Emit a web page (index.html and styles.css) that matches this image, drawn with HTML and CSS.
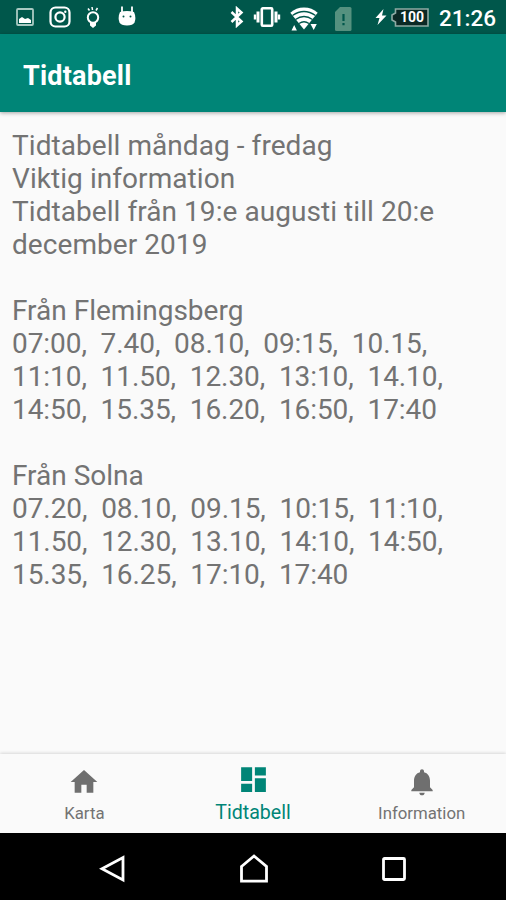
FILE: index.html
```html
<!DOCTYPE html>
<html lang="sv">
<head>
    <meta charset="UTF-8">
    <meta name="viewport" content="width=device-width, initial-scale=1.0">
    <title>Tidtabell</title>
    <link rel="stylesheet" href="styles.css">
</head>
<body>

    <!-- Status bar -->
    <div class="status-bar">
        <div class="status-left">
            <svg width="18" height="18" viewBox="0 0 18 18">
                <rect x="1" y="1" width="16" height="16" rx="1" fill="none" stroke="#a9c9c2" stroke-width="1.8"/>
                <path d="M3 15v-4l3-2 3 2 3-1 3 2v3z" fill="#fff"/>
            </svg>
            <svg width="22" height="22" viewBox="0 0 22 22" fill="none" stroke="#fff" stroke-width="2.2">
                <rect x="1.5" y="1.5" width="19" height="19" rx="5"/>
                <circle cx="11" cy="11" r="4.6"/>
                <circle cx="16.3" cy="5.7" r=".6" stroke-width="1.2"/>
            </svg>
            <svg width="16" height="22" viewBox="0 0 16 22" fill="none" stroke="#fff" stroke-width="2">
                <circle cx="8" cy="11.5" r="5.200"/>
                <path d="M3 2.500l1.500 2M7 1l.5 3M12.500 2L11 4.500" stroke-width="1.5"/>
                <path d="M5 16h6v3.500L8 22l-3-2.500z" fill="#fff" stroke="none"/>
            </svg>
            <svg width="18" height="22" viewBox="0 0 18 22">
                <path d="M4 8V1.500M14 8V1.500" stroke="#fff" stroke-width="1.8"/>
                <path d="M2 7q7-2 14 0q2.500 5.500.5 10.500q-1.500 3-7.500 3t-7.500-3q-2-5 .5-10.500z" fill="#fff"/>
                <circle cx="5.500" cy="11.500" r="1" fill="#00574b"/>
                <circle cx="12.500" cy="11.500" r="1" fill="#00574b"/>
            </svg>
        </div>
        <div class="status-right">
            <svg class="bluetooth" width="14" height="22" viewBox="0 0 14 22" fill="none" stroke="#fff" stroke-width="2.5">
                <path d="M1.500 6l10 9.500L7 19.500V2.500l4.500 4L1.500 16"/>
            </svg>
            <svg class="vibrate" width="28" height="20" viewBox="0 0 28 20" fill="none" stroke="#fff">
                <rect x="8.800" y="1.300" width="10.400" height="17.400" rx="1" stroke-width="2.600"/>
                <path d="M5 4.500v11M23 4.500v11" stroke-width="3"/>
                <path d="M2 7.500v5M26 7.500v5" stroke-width="2.400"/>
            </svg>
            <svg class="wifi" width="28" height="24" viewBox="0 0 28 24">
                <path d="M14 0.500q8 0 13.700 5.300L14 22.500.3 5.800Q6 .5 14 .5z" fill="#fff"/>
                <path d="M2.500 8.500q11.500-8 23 0M5.500 12.500q8.500-6 17 0M9 16.500q5-3.500 10 0" fill="none" stroke="#00574b" stroke-width="1.300"/>
                <path d="M1.500 23.500l2.700-5.500 2.700 5.500zM20.500 17h6.300l-3.100 6z" fill="#fff"/>
            </svg>
            <svg class="sim" width="18" height="24" viewBox="0 0 18 24">
                <path d="M6 0h10q1.500 0 1.500 1.500v21q0 1.500-1.500 1.500H2.500Q1 24 1 22.500V5z" fill="#55917f"/>
                <path d="M9.500 7v7M9.500 16v2.200" stroke="#00574b" stroke-width="2.200"/>
            </svg>
            <svg class="bolt" width="12" height="16" viewBox="0 0 12 16">
                <path d="M8.500 0L.5 9h4l-2 7 9-9.500H7z" fill="#fff"/>
            </svg>
            <div class="battery">
                <svg width="38" height="19" viewBox="0 0 38 19">
                    <path d="M4.500 1h32.500v17H4.500v-4L1 12V7l3.500-2z" fill="#0b2925" stroke="#8eaaa4" stroke-width="1.600"/>
                </svg>
                <span>100</span>
            </div>
            <span class="clock">21:26</span>
        </div>
    </div>

    <header class="app-bar">
        <h1>Tidtabell</h1>
    </header>

    <!-- Timetable -->
    <main class="content">
        <p class="info">Tidtabell måndag - fredag
Viktig information
Tidtabell från 19:e augusti till 20:e
december 2019</p>
        <h2>Från Flemingsberg</h2>
        <p class="times">07:00,  7.40,  08.10,  09:15,  10.15,
11:10,  11.50,  12.30,  13:10,  14.10,
14:50,  15.35,  16.20,  16:50,  17:40</p>
        <h2>Från Solna</h2>
        <p class="times">07.20,  08.10,  09.15,  10:15,  11:10,
11.50,  12.30,  13.10,  14:10,  14:50,
15.35,  16.25,  17:10,  17:40</p>
    </main>

    <!-- Bottom navigation -->
    <nav class="tabs">
        <a class="tab">
            <svg width="32" height="32" viewBox="0 0 24 24"><path d="M10 20v-6h4v6h5v-8h3L12 3 2 12h3v8z"/></svg>
            <span>Karta</span>
        </a>
        <a class="tab active">
            <svg width="33" height="33" viewBox="0 0 24 24"><path d="M3 13h8V3H3v10zm0 8h8v-6H3v6zm10 0h8V11h-8v10zm0-18v6h8V3h-8z"/></svg>
            <span>Tidtabell</span>
        </a>
        <a class="tab">
            <svg width="32" height="32" viewBox="0 0 24 24"><path d="M12 22c1.100 0 2-.9 2-2h-4c0 1.100.9 2 2 2zm6-6v-5c0-3.070-1.640-5.640-4.500-6.320V4c0-.83-.67-1.500-1.500-1.500s-1.500.67-1.500 1.500v.68C7.630 5.360 6 7.920 6 11v5l-2 2v1h16v-1l-2-2z"/></svg>
            <span>Information</span>
        </a>
    </nav>

    <!-- System buttons -->
    <div class="system-bar">
        <svg width="28" height="28" viewBox="0 0 28 28"><path d="M24 2.500v22.500L3 13.800z"/></svg>
        <svg width="30" height="30" viewBox="0 0 30 30"><path d="M2.500 12.500L15 2l12.500 10.500v14.700h-25z"/></svg>
        <svg width="26" height="26" viewBox="0 0 26 26"><rect x="2.500" y="2.500" width="21" height="21" rx="1"/></svg>
    </div>

</body>
</html>
```
FILE: styles.css
```css
body, html {
    margin: 0;
    padding: 0;
    height: 100%;
    overflow: hidden;
}
body {
    display: flex;
    flex-direction: column;
    font-family: Roboto, sans-serif;
    background-color: #fafafa;
}
svg {
    display: block;
    flex: none;
}

.status-bar {
    height: 34px;
    flex: none;
    display: flex;
    justify-content: space-between;
    background-color: #00574b;
    color: white;
}
.status-left, .status-right {
    display: flex;
    align-items: center;
}
.status-left {
    gap: 14.5px;
    padding-left: 16px;
}
.status-left svg:last-child {
    margin-left: 2px;
    margin-top: -2px;
}
.status-right {
    padding-right: 11px;
}
.vibrate { margin-left: 9px; }
.wifi { margin: 3px 0 0 9px; }
.sim { margin: 3px 0 0 16px; }
.bolt { margin-left: 23px; }
.battery {
    position: relative;
    margin-left: 4px;
}
.battery span {
    position: absolute;
    left: 9px;
    top: 0;
    font-size: 14px;
    font-weight: bold;
    line-height: 19px;
}
.clock {
    width: 56px;
    margin: 3px 0 0 10px;
    font-size: 22.5px;
    font-weight: 500;
    line-height: 27px;
}

.app-bar {
    height: 78px;
    flex: none;
    display: flex;
    align-items: center;
    padding: 5px 23px 0;
    box-sizing: border-box;
    background-color: #008577;
    box-shadow: 0 1px 4px rgba(0, 0, 0, 0.35);
}
.app-bar h1 {
    margin: 0;
    font-size: 27px;
    font-weight: bold;
    letter-spacing: 0.2px;
    color: white;
}

.content {
    flex: 1;
    padding: 17px 12px 0;
    font-size: 28px;
    line-height: 33px;
    color: #737373;
}
.content h2 {
    margin: 0;
    font-size: 28px;
    font-weight: normal;
}
.content p {
    margin: 0 0 33px;
    white-space: pre;
}
.info {
    letter-spacing: 0.06px;
}
.times {
    letter-spacing: -0.07px;
}

.tabs {
    height: 79px;
    flex: none;
    display: flex;
    background-color: #fafafa;
    box-shadow: 0 -1px 3px rgba(0, 0, 0, 0.14);
}
.tab {
    flex: 1;
    display: flex;
    flex-direction: column;
    align-items: center;
    padding-top: 12px;
    color: #737373;
    fill: #6f6f6f;
    font-size: 16.8px;
    line-height: 20px;
}
.tab span {
    margin-top: 5px;
}
.tab.active {
    padding-top: 9px;
    color: #008577;
    fill: #008577;
    font-size: 19.6px;
}
.tab.active span {
    margin-top: 7px;
}

.system-bar {
    height: 67px;
    flex: none;
    display: flex;
    justify-content: center;
    align-items: center;
    gap: 112px;
    padding-top: 4px;
    box-sizing: border-box;
    background-color: black;
    fill: none;
    stroke: white;
    stroke-width: 2.8;
}
```
